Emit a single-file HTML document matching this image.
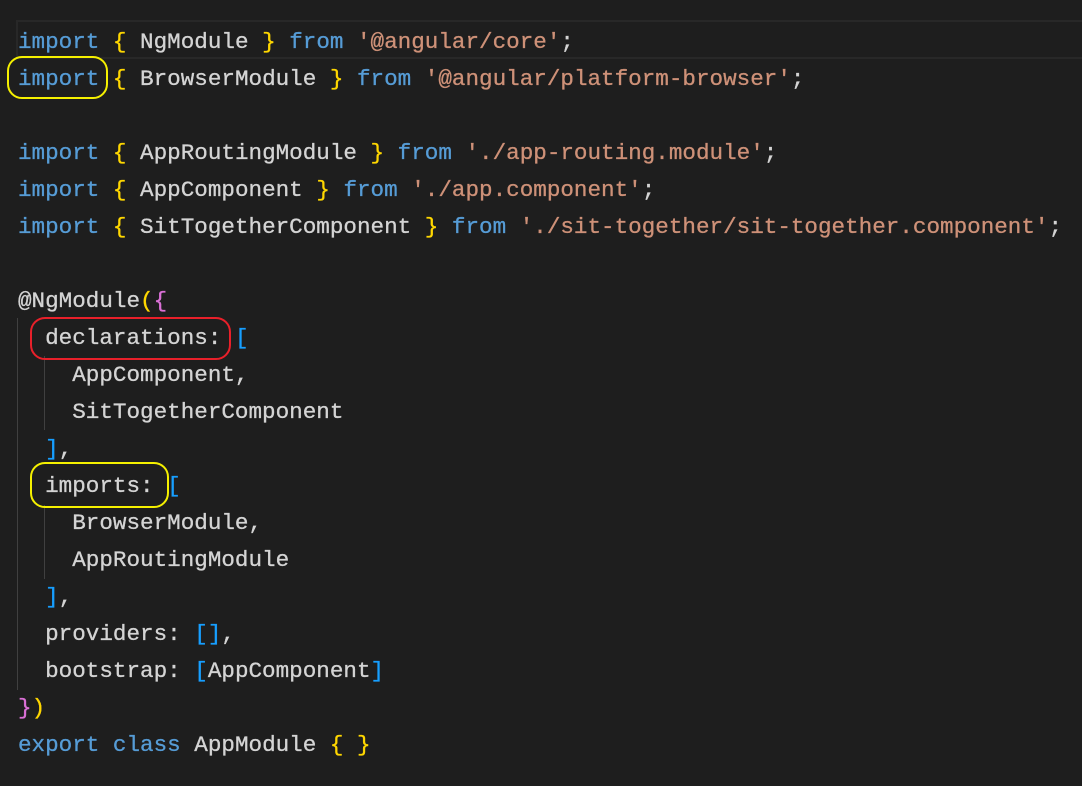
<!DOCTYPE html>
<html><head><meta charset="utf-8"><style>
html,body{margin:0;padding:0;background:#1e1e1e;width:1082px;height:786px;overflow:hidden;}
.code{position:absolute;left:18px;top:24px;font-family:"Liberation Mono",monospace;font-size:22.6px;line-height:37px;color:#d4d4d4;white-space:pre;-webkit-text-stroke:0.3px currentColor;}
.k{color:#569cd6}.b{color:#ffd700}.s{color:#ce9178}.p{color:#da70d6}.q{color:#179fff}
.hl{position:absolute;left:16px;top:20px;right:-2px;height:35px;border:2px solid #282828;}
.g{position:absolute;width:1px;background:#404040;}
.o{position:absolute;border-radius:15px;border:2.5px solid;}
</style></head><body>
<div class="hl"></div>
<div class="g" style="left:17px;top:318px;height:372px"></div>
<div class="g" style="left:44px;top:356px;height:74px"></div>
<div class="g" style="left:44px;top:505px;height:74px"></div>
<div class="code"><span class="k">import</span> <span class="b">{</span> NgModule <span class="b">}</span> <span class="k">from</span> <span class="s">'@angular/core'</span>;
<span class="k">import</span> <span class="b">{</span> BrowserModule <span class="b">}</span> <span class="k">from</span> <span class="s">'@angular/platform-browser'</span>;

<span class="k">import</span> <span class="b">{</span> AppRoutingModule <span class="b">}</span> <span class="k">from</span> <span class="s">'./app-routing.module'</span>;
<span class="k">import</span> <span class="b">{</span> AppComponent <span class="b">}</span> <span class="k">from</span> <span class="s">'./app.component'</span>;
<span class="k">import</span> <span class="b">{</span> SitTogetherComponent <span class="b">}</span> <span class="k">from</span> <span class="s">'./sit-together/sit-together.component'</span>;

@NgModule<span class="b">(</span><span class="p">{</span>
  declarations: <span class="q">[</span>
    AppComponent,
    SitTogetherComponent
  <span class="q">]</span>,
  imports: <span class="q">[</span>
    BrowserModule,
    AppRoutingModule
  <span class="q">]</span>,
  providers: <span class="q">[]</span>,
  bootstrap: <span class="q">[</span>AppComponent<span class="q">]</span>
<span class="p">}</span><span class="b">)</span>
<span class="k">export</span> <span class="k">class</span> AppModule <span class="b">{</span> <span class="b">}</span></div>
<div class="o" style="border-color:#f5f000;left:7px;top:56px;width:97px;height:39px"></div>
<div class="o" style="border-color:#e8202a;left:30px;top:317px;width:197px;height:39px"></div>
<div class="o" style="border-color:#f5f000;left:30px;top:462px;width:135px;height:42px"></div>
</body></html>
